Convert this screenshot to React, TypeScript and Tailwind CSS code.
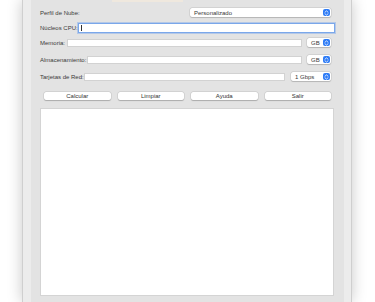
import React from "react";

function Stepper() {
  return (
    <div className="w-[7px] h-[7px] rounded-[2px] bg-[#2f7cf6] flex items-center justify-center">
      <svg width="5" height="6" viewBox="0 0 5 6" fill="none">
        <path d="M1 2.2 L2.5 0.9 L4 2.2" stroke="white" strokeWidth="0.8" strokeLinecap="round" strokeLinejoin="round" />
        <path d="M1 3.8 L2.5 5.1 L4 3.8" stroke="white" strokeWidth="0.8" strokeLinecap="round" strokeLinejoin="round" />
      </svg>
    </div>
  );
}

function Select({ text, className }: { text: string; className: string }) {
  return (
    <div
      className={
        "h-[9px] bg-white rounded-[2px] shadow-[0_0_0_0.5px_rgba(0,0,0,0.12),0_0.5px_1px_rgba(0,0,0,0.15)] flex items-center justify-between pl-[4px] pr-[1px] " +
        className
      }
    >
      <span className="text-[6px] leading-none text-[#3a3a3a]">{text}</span>
      <Stepper />
    </div>
  );
}

function Label({ text, w }: { text: string; w: string }) {
  return <span className={"text-[6px] leading-none text-[#3a3a3a] whitespace-nowrap shrink-0 " + w}>{text}</span>;
}

function Input({ className }: { className: string }) {
  return <div className={"bg-white border-[0.5px] border-[#d2d2d2] " + className} />;
}

export default function App() {
  return (
    <div
      className="w-[375px] h-[302px] bg-white overflow-hidden flex"
      style={{ fontFamily: '"Liberation Sans", Arial, sans-serif' }}
    >
      <div className="ml-[22px] w-[330px] h-full bg-[#ececec] border-x border-[#cfcfcf] shadow-[0_0_14px_rgba(0,0,0,0.22)] flex">
        <div className="ml-[8px] w-[313px] h-full bg-[#e3e3e3] px-[9px] flex flex-col">
          <div className="ml-[72px] w-[71px] h-[2px] bg-[#efe8de] shrink-0" />

          {/* Perfil de Nube */}
          <div className="mt-[6px] h-[9px] flex items-center justify-between shrink-0">
            <Label text="Perfil de Nube:" w="" />
            <Select text="Personalizado" className="w-[141px] mr-[4px]" />
          </div>

          {/* Núcleos CPU */}
          <div className="mt-[6px] h-[10px] flex items-center gap-[3px] shrink-0">
            <Label text="Núcleos CPU:" w="w-[35px]" />
            <div className="flex-1 h-[10px] bg-white border border-[#7aa7ea] shadow-[0_0_0_1px_rgba(122,167,234,0.45)] flex items-center pl-[2px]">
              <div className="w-[0.5px] h-[6px] bg-[#333]" />
            </div>
          </div>

          {/* Memoria */}
          <div className="mt-[5px] h-[9px] flex items-center shrink-0">
            <Label text="Memoria:" w="w-[27px]" />
            <Input className="w-[235px] h-[8px]" />
            <Select text="GB" className="w-[24px] ml-[5px]" />
          </div>

          {/* Almacenamiento */}
          <div className="mt-[8px] h-[9px] flex items-center shrink-0">
            <Label text="Almacenamiento:" w="w-[47px]" />
            <Input className="w-[215px] h-[8px]" />
            <Select text="GB" className="w-[24px] ml-[5px]" />
          </div>

          {/* Tarjetas de Red */}
          <div className="mt-[8px] h-[9px] flex items-center shrink-0">
            <Label text="Tarjetas de Red:" w="w-[44px]" />
            <Input className="w-[201px] h-[8px]" />
            <Select text="1 Gbps" className="w-[40px] ml-[6px]" />
          </div>

          {/* Buttons */}
          <div className="mt-[11px] mx-[4px] h-[8px] flex gap-[7px] shrink-0">
            {["Calcular", "Limpiar", "Ayuda", "Salir"].map((b) => (
              <div
                key={b}
                className="flex-1 h-[8px] bg-white rounded-[2px] shadow-[0_0_0_0.5px_rgba(0,0,0,0.1),0_0.5px_1px_rgba(0,0,0,0.2)] flex items-center justify-center"
              >
                <span className="text-[6px] leading-none text-[#333]">{b}</span>
              </div>
            ))}
          </div>

          {/* Text area */}
          <div className="mt-[8px] mr-[1px] h-[188px] bg-white border border-[#d4d4d4] shrink-0" />
        </div>
      </div>
    </div>
  );
}
